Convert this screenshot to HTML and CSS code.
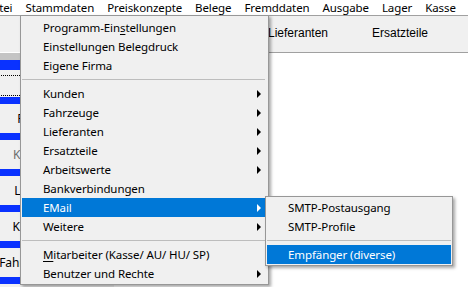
FILE: index.html
```html
<!DOCTYPE html>
<html lang="de">
<head>
  <meta charset="UTF-8">
  <title>Stammdaten</title>
  <link rel="stylesheet" href="styles.css">
</head>
<body>
  <div class="window">
    <div class="menubar">
      <span class="mb-item">Datei</span>
      <span class="mb-item">Stammdaten</span>
      <span class="mb-item">Preiskonzepte</span>
      <span class="mb-item">Belege</span>
      <span class="mb-item">Fremddaten</span>
      <span class="mb-item">Ausgabe</span>
      <span class="mb-item">Lager</span>
      <span class="mb-item">Kasse</span>
    </div>
    <div class="app">
      <aside class="sidebar">
        <div class="side-head"></div>
        <div class="side-cap"></div>
        <div class="side-bar first"></div>
        <div class="side-btn focus">Auftrag</div>
        <div class="side-bar"></div>
        <div class="side-btn">Formulare</div>
        <div class="side-bar"></div>
        <div class="side-btn disabled">Kundenliste</div>
        <div class="side-bar"></div>
        <div class="side-btn">Lieferanten</div>
        <div class="side-bar"></div>
        <div class="side-btn">Kassenbuch</div>
        <div class="side-bar"></div>
        <div class="side-btn">Fahrzeughistorie</div>
        <div class="side-bar"></div>
      </aside>
      <main class="main">
        <div class="tabs">
          <span class="tab">Fahrzeuge</span>
          <span class="tab">Lieferanten</span>
          <span class="tab">Ersatzteile</span>
        </div>
        <div class="pane"></div>
      </main>
    </div>
  </div>

  <!-- Stammdaten dropdown -->
  <div class="menu main-menu">
    <div class="item">Programm-Ein<u>s</u>tellungen</div>
    <div class="item">Einstellungen Belegdruck</div>
    <div class="item">Eigene Firma</div>
    <div class="sep"></div>
    <div class="item sub">Kunden</div>
    <div class="item sub">Fahrzeuge</div>
    <div class="item sub">Lieferanten</div>
    <div class="item sub">Ersatzteile</div>
    <div class="item sub">Arbeitswerte</div>
    <div class="item">Bankverbindungen</div>
    <div class="item sub active">EMail</div>
    <div class="item sub">Weitere</div>
    <div class="sep"></div>
    <div class="item"><u>M</u>itarbeiter (Kasse/ AU/ HU/ SP)</div>
    <div class="item sub">Benutzer und Rechte</div>
  </div>

  <!-- EMail submenu -->
  <div class="menu sub-menu">
    <div class="item">SMTP-Postausgang</div>
    <div class="item">SMTP-Profile</div>
    <div class="sep"></div>
    <div class="item active">Empfänger (diverse)</div>
  </div>
</body>
</html>
```

FILE: styles.css
```css
* {
  box-sizing: border-box;
}

body {
  margin: 0;
  width: 468px;
  height: 287px;
  overflow: hidden;
  position: relative;
  background: #fff;
  font-family: "Noto Sans", sans-serif;
  font-size: 11.5px;
  letter-spacing: -0.1px;
  color: #000;
}

/* the window is cut off a bit on the left */
.window {
  margin-left: -22px;
}

.menubar {
  display: flex;
  height: 15px;
  line-height: 15px;
  background: #fff;
  white-space: nowrap;
}

.mb-item {
  padding: 0 6.5px;
}

.app {
  display: flex;
  height: 272px;
}

/* left button column */
.sidebar {
  width: 136px;
  flex: none;
  background: #f0f0f0;
  display: flex;
  flex-direction: column;
}

.side-head {
  height: 38px;
  border-top: 1px solid #a0a0a0;
  border-bottom: 1px solid #fff;
}

.side-cap {
  height: 7px;
  background: #c4c4c4;
}

.side-bar {
  height: 7px;
  flex: none;
  background: #0a32ff;
}

.side-bar.first {
  height: 10px;
}

.side-btn {
  height: 29px;
  flex: none;
  display: flex;
  align-items: center;
  justify-content: center;
  white-space: nowrap;
  font-size: 12px;
}

.side-btn.focus {
  height: 27px;
  position: relative;
}

.side-btn.focus::after {
  content: "";
  position: absolute;
  top: 5px;
  left: 4px;
  right: 4px;
  bottom: 1px;
  border: 1px dotted #000;
}

.side-btn.disabled {
  color: #6d6d6d;
}

.main {
  flex: 1;
  display: flex;
  flex-direction: column;
}

.tabs {
  height: 38px;
  display: flex;
  align-items: center;
  padding-left: 50px;
  padding-bottom: 2px;
  background: #f0f0f0;
  border-top: 1px solid #a0a0a0;
  border-bottom: 1px solid #a0a0a0;
  font-family: "Liberation Sans", Arial, sans-serif;
  font-size: 12px;
  letter-spacing: 0;
}

.tab {
  width: 104px;
  flex: none;
}

.pane {
  flex: 1;
  background: #fff;
}

/* popup menus */
.menu {
  position: absolute;
  background: #f0f0f0;
  border: 1px solid #979797;
  box-shadow: 2px 2px 3px rgba(0, 0, 0, 0.35);
}

.main-menu {
  left: 20px;
  top: 15px;
  width: 249px;
  padding: 2px 3px 1px 1px;
}

.sub-menu {
  left: 265px;
  top: 196px;
  width: 188px;
  padding: 1px;
}

.item {
  height: 19px;
  line-height: 19px;
  padding-left: 21px;
  display: flex;
  align-items: center;
  white-space: nowrap;
}

.item u {
  text-decoration-thickness: 1px;
  text-underline-offset: 2px;
}

.item.sub::after {
  content: "";
  margin-left: auto;
  margin-right: 4px;
  border-left: 4px solid #000;
  border-top: 4px solid transparent;
  border-bottom: 4px solid transparent;
}

.item.active {
  background: #0078d7;
  color: #fff;
}

.item.active.sub::after {
  border-left-color: #fff;
}

.sep {
  height: 9px;
  padding-top: 4px;
}

.sep::before {
  content: "";
  display: block;
  height: 1px;
  background: #bdbdbd;
}
```
